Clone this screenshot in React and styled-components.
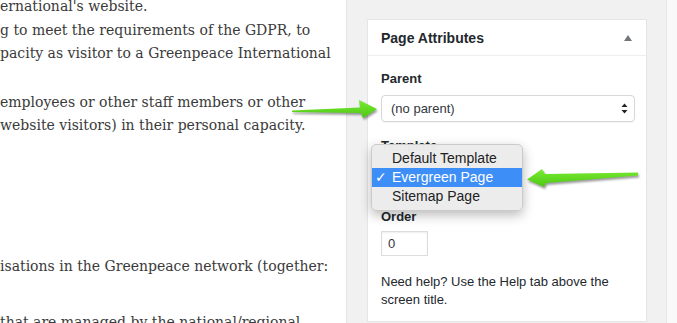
import React from 'react'
import styled, { createGlobalStyle } from 'styled-components'

const Global = createGlobalStyle`
  html, body { margin: 0; padding: 0; }
  body { width: 677px; height: 323px; overflow: hidden; background: #fff; }
`

export default function App() {
  return (
    <Page>
      <Global />
      <Article>
        <Para>
          ernational's website.<br />
          g to meet the requirements of the GDPR, to<br />
          pacity as visitor to a Greenpeace International
        </Para>
        <Para>
          employees or other staff members or other<br />
          website visitors) in their personal capacity.
        </Para>
        <Para $top={117}>isations in the Greenpeace network (together:</Para>
        <Para $top={33}>that are managed by the national/regional</Para>
      </Article>

      <Sidebar>
        <Box>
          <BoxHead>
            <h2>Page Attributes</h2>
            <Toggle />
          </BoxHead>
          <BoxBody>
            <Label>Parent</Label>
            <Select>
              <span>(no parent)</span>
              <Updown>
                <svg width="7" height="11" viewBox="0 0 7 11">
                  <path d="M3.5 0.5 L6.5 4 L0.5 4 Z M3.5 10.5 L6.5 7 L0.5 7 Z" fill="#222" />
                </svg>
              </Updown>
            </Select>
            <Label $top={16}>Template</Label>
            <Spacer />
            <Label $top={13} $bottom={6}>Order</Label>
            <Input>0</Input>
            <Help>Need help? Use the Help tab above the screen title.</Help>

            <Menu>
              <MenuItem>Default Template</MenuItem>
              <MenuItem $active>Evergreen Page</MenuItem>
              <MenuItem>Sitemap Page</MenuItem>
            </Menu>
          </BoxBody>
        </Box>
      </Sidebar>
      <Edge />

      <Arrow style={{ left: 290, top: 98 }} width="92" height="26">
        <defs>
          <linearGradient id="g1" x1="0" y1="0" x2="0" y2="1">
            <stop offset="0" stopColor="#79ec33" />
            <stop offset="1" stopColor="#4cc712" />
          </linearGradient>
        </defs>
        <polygon points="2,12.5 70,9.5 69,2 87,11 73,20 71,15 2,14" fill="url(#g1)" />
      </Arrow>
      <Arrow style={{ left: 524, top: 166 }} width="120" height="28">
        <defs>
          <linearGradient id="g2" x1="0" y1="0" x2="0" y2="1">
            <stop offset="0" stopColor="#79ec33" />
            <stop offset="1" stopColor="#4cc712" />
          </linearGradient>
        </defs>
        <polygon points="114,6.5 21,8 18,3 3,13.5 20,21 22,17 114,9.5" fill="url(#g2)" />
      </Arrow>
    </Page>
  )
}

const Page = styled.div`
  position: relative;
  display: flex;
  width: 677px;
  height: 323px;
  overflow: hidden;
`

const Article = styled.div`
  width: 346px;
  flex: none;
  background: #fff;
  overflow: hidden;
  white-space: nowrap;
  font-family: "DejaVu Serif", Georgia, serif;
  font-size: 14px;
  line-height: 23.5px;
  color: #3a3a3a;
  margin-top: -5px;
`

const Para = styled.p`
  margin: ${({ $top }) => ($top != null ? $top : 25)}px 0 0 0;
  &:first-child { margin-top: 0; }
`

const Sidebar = styled.div`
  width: 320px;
  flex: none;
  background: #f1f1f1;
  border-left: 1px solid #e4e4e4;
  padding: 19px 0 0 20px;
  box-sizing: border-box;
`

const Edge = styled.div`
  flex: 1;
  background: #f9f9f9;
  border-left: 1px solid #e6e6e6;
`

const Box = styled.div`
  width: 280px;
  background: #fff;
  border: 1px solid #e5e5e5;
  box-sizing: border-box;
  font-family: "Liberation Sans", Arial, sans-serif;
  color: #23282d;
`

const BoxHead = styled.div`
  display: flex;
  align-items: center;
  justify-content: space-between;
  height: 35px;
  padding: 0 13px 0 13px;
  border-bottom: 1px solid #eee;
  h2 {
    margin: 0;
    font-size: 14px;
    font-weight: bold;
    line-height: 1;
  }
`

const Toggle = styled.span`
  width: 0;
  height: 0;
  border-left: 4px solid transparent;
  border-right: 4px solid transparent;
  border-bottom: 6px solid #72777c;
  margin-right: 1px;
`

const BoxBody = styled.div`
  position: relative;
  padding: 15px 11px 12px 13px;
`

const Label = styled.div`
  font-size: 13px;
  font-weight: bold;
  line-height: 16px;
  margin-top: ${({ $top }) => $top || 0}px;
  margin-bottom: ${({ $bottom }) => ($bottom != null ? $bottom : 8)}px;
`

const Select = styled.div`
  display: flex;
  align-items: center;
  justify-content: space-between;
  height: 27px;
  box-sizing: border-box;
  border: 1px solid #d7d7d7;
  border-radius: 4px;
  background: #fff;
  padding: 0 6px 0 9px;
  font-size: 13px;
  color: #32373c;
  box-shadow: 0 1px 1px rgba(0, 0, 0, 0.04);
`

const Updown = styled.span`
  display: flex;
`

const Spacer = styled.div`
  height: 34px;
`

const Input = styled.div`
  width: 47px;
  height: 25px;
  box-sizing: border-box;
  border: 1px solid #ddd;
  padding: 0 6px;
  font-size: 13px;
  line-height: 23px;
  color: #32373c;
  box-shadow: inset 0 1px 2px rgba(0, 0, 0, 0.07);
`

const Help = styled.p`
  margin: 17px 0 0 0;
  font-size: 13px;
  line-height: 18px;
  padding-right: 10px;
`

const Menu = styled.div`
  position: absolute;
  left: 3px;
  top: 88px;
  width: 152px;
  padding: 4px 0;
  box-sizing: border-box;
  background: rgba(236, 236, 236, 0.98);
  border: 1px solid #cbcbcb;
  border-radius: 5px;
  box-shadow: 0 4px 12px rgba(0, 0, 0, 0.28);
  font-family: "Liberation Sans", Arial, sans-serif;
  font-size: 14px;
`

const MenuItem = styled.div`
  position: relative;
  height: 19px;
  line-height: 19px;
  padding-left: 20px;
  color: ${({ $active }) => ($active ? '#fff' : '#222')};
  background: ${({ $active }) => ($active ? '#3d8ef6' : 'transparent')};
  &::before {
    content: ${({ $active }) => ($active ? "'✓'" : "''")};
    position: absolute;
    left: 3px;
    top: 0;
    font-family: "DejaVu Sans", sans-serif;
    font-size: 14px;
    font-weight: bold;
  }
`

const Arrow = styled.svg`
  position: absolute;
  pointer-events: none;
  filter: drop-shadow(1px 2px 1.2px rgba(0, 0, 0, 0.4));
`
